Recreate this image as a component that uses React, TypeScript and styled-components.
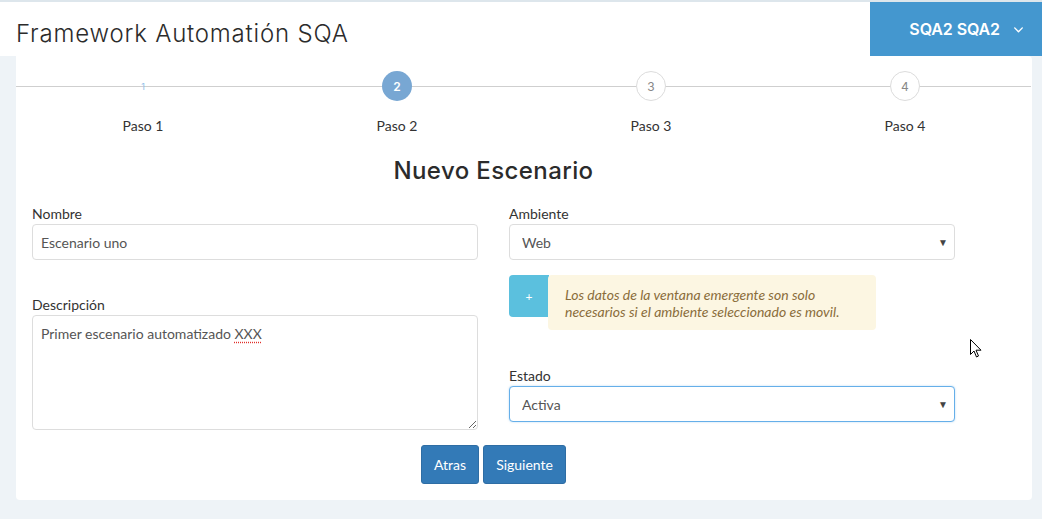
import React from "react";
import styled, { createGlobalStyle } from "styled-components";

const Global = createGlobalStyle`
  html, body { margin: 0; padding: 0; }
  body {
    background: #eef3f7;
    font-family: Lato, "Open Sans", sans-serif;
    color: #333;
  }
  * { box-sizing: border-box; }
`;

const Page = styled.div`
  min-height: 519px;
  background: #eef3f7;
  border-top: 2px solid #dde6ec;
`;

const Header = styled.header`
  display: flex;
  justify-content: space-between;
  align-items: stretch;
  height: 54px;
  background: #fff;
`;

const Brand = styled.h1`
  margin: 0;
  padding-left: 16px;
  align-self: center;
  margin-top: 8px;
  font-family: Inter, "Open Sans", sans-serif;
  font-weight: 300;
  font-size: 24px;
  letter-spacing: 0.8px;
  color: #2b2b2b;
`;

const UserMenu = styled.button`
  width: 172px;
  border: 0;
  background: #4497cf;
  color: #fff;
  font-family: Inter, "Open Sans", sans-serif;
  font-weight: 600;
  font-size: 16px;
  display: flex;
  align-items: center;
  justify-content: flex-end;
  gap: 12px;
  padding: 0 17px 0 0;
  letter-spacing: -0.1px;
`;

const Main = styled.main`
  padding: 0 10px 19px 16px;
`;

const Card = styled.section`
  position: relative;
  background: #fff;
  border-radius: 0 4px 4px 4px;
  padding: 15px 0 16px;
`;

const Stepper = styled.ol`
  position: relative;
  list-style: none;
  margin: 0;
  padding: 0;
  display: grid;
  grid-template-columns: repeat(4, 1fr);
  &::before {
    content: "";
    position: absolute;
    left: 0;
    right: 1px;
    top: 15px;
    height: 1px;
    background: #cfcfcf;
  }
`;

const Step = styled.li`
  position: relative;
  display: flex;
  flex-direction: column;
  align-items: center;
`;

const Dot = styled.span<{ $state: "done" | "active" | "todo" }>`
  width: 30px;
  height: 30px;
  border-radius: 50%;
  display: flex;
  align-items: center;
  justify-content: center;
  font-family: Inter, "Open Sans", sans-serif;
  font-size: ${(p) => (p.$state === "done" ? "9px" : "12px")};
  font-weight: ${(p) => (p.$state === "active" ? 600 : 400)};
  background: ${(p) =>
    p.$state === "active" ? "#78a7d3" : p.$state === "todo" ? "#fff" : "transparent"};
  color: ${(p) =>
    p.$state === "active" ? "#fff" : p.$state === "todo" ? "#888" : "#8fc0e8"};
  border: 1px solid
    ${(p) => (p.$state === "todo" ? "#dcdcdc" : "transparent")};
`;

const StepLabel = styled.span`
  margin-top: 15px;
  font-size: 14px;
  line-height: 20px;
  color: #333;
`;

const Inner = styled.div`
  margin-left: 16px;
  width: 923px;
`;

const Title = styled.h2`
  margin: 18px 0 16px;
  text-align: center;
  font-family: Inter, "Open Sans", sans-serif;
  font-weight: 500;
  font-size: 24px;
  line-height: 34px;
  color: #2b2b2b;
  letter-spacing: 0.4px;
`;

const Form = styled.form`
  display: grid;
  grid-template-columns: 446px 446px;
  column-gap: 31px;
`;

const Column = styled.div`
  display: flex;
  flex-direction: column;
`;

const Group = styled.div<{ $mt?: number }>`
  display: flex;
  flex-direction: column;
  margin-top: ${(p) => p.$mt ?? 0}px;
`;

const Label = styled.label`
  font-size: 14px;
  line-height: 20px;
  color: #333;
`;

const fieldBase = `
  width: 100%;
  font-family: Lato, "Open Sans", sans-serif;
  font-size: 14px;
  color: #555;
  background: #fff;
  border: 1px solid #ddd;
  border-radius: 4px;
  padding: 0 8px;
`;

const Input = styled.input`
  ${fieldBase}
  height: 36px;
  outline: none;
`;

const TextArea = styled.div`
  ${fieldBase}
  height: 115px;
  padding: 8px 8px;
  line-height: 20px;
  resize: both;
  overflow: auto;
`;

const Misspelled = styled.span`
  text-decoration: underline dotted #e0302a;
  text-underline-offset: 3px;
`;

const SelectWrap = styled.div`
  position: relative;
`;

const Select = styled.select<{ $focus?: boolean }>`
  ${fieldBase}
  appearance: none;
  height: 36px;
  padding-left: 12px;
  outline: none;
  border-color: ${(p) => (p.$focus ? "#66afe9" : "#ddd")};
  box-shadow: ${(p) => (p.$focus ? "0 0 2px rgba(102,175,233,.5)" : "none")};
`;

const Caret = styled.span`
  position: absolute;
  right: 7px;
  top: 50%;
  transform: translateY(-50%);
  font-size: 10px;
  color: #444;
  pointer-events: none;
`;

const Notice = styled.div`
  display: flex;
  align-items: flex-start;
  margin-top: 15px;
`;

const AddButton = styled.button`
  width: 40px;
  height: 42px;
  border: 0;
  border-radius: 4px 0 0 4px;
  background: #5bc0de;
  color: #fff;
  font-size: 12px;
  font-family: Lato, sans-serif;
  padding: 0;
`;

const NoticeText = styled.p`
  margin: 0 0 0 -1px;
  width: 328px;
  height: 55px;
  padding: 11px 10px 0 17px;
  background: #fcf6e2;
  border-radius: 4px;
  font-size: 14px;
  line-height: 17px;
  font-style: italic;
  color: #8a6d3b;
`;

const Actions = styled.div`
  display: flex;
  justify-content: center;
  gap: 4px;
  margin-top: 15px;
`;

const Button = styled.button`
  height: 39px;
  padding: 0 12px;
  background: #337ab7;
  border: 1px solid #2e6da4;
  border-radius: 3px;
  color: #fff;
  font-family: Lato, sans-serif;
  font-size: 14px;
`;

const Cursor = styled.svg`
  position: absolute;
  left: 954px;
  top: 283px;
`;

export default function App() {
  return (
    <>
      <Global />
      <Page>
        <Header>
          <Brand>Framework Automatión SQA</Brand>
          <UserMenu type="button">
            SQA2 SQA2
            <svg width="13" height="13" viewBox="0 0 24 24" fill="none" stroke="#fff" strokeWidth="2.6" strokeLinecap="round" strokeLinejoin="round">
              <path d="M5 9l7 7 7-7" />
            </svg>
          </UserMenu>
        </Header>
        <Main>
          <Card>
            <Stepper>
              <Step>
                <Dot $state="done">1</Dot>
                <StepLabel>Paso 1</StepLabel>
              </Step>
              <Step>
                <Dot $state="active">2</Dot>
                <StepLabel>Paso 2</StepLabel>
              </Step>
              <Step>
                <Dot $state="todo">3</Dot>
                <StepLabel>Paso 3</StepLabel>
              </Step>
              <Step>
                <Dot $state="todo">4</Dot>
                <StepLabel>Paso 4</StepLabel>
              </Step>
            </Stepper>
            <Inner>
              <Title>Nuevo Escenario</Title>
              <Form onSubmit={(e) => e.preventDefault()}>
                <Column>
                  <Group>
                    <Label>Nombre</Label>
                    <Input defaultValue="Escenario uno" />
                  </Group>
                  <Group $mt={35}>
                    <Label>Descripción</Label>
                    <TextArea role="textbox" aria-multiline="true">
                      Primer escenario automatizado <Misspelled>XXX</Misspelled>
                    </TextArea>
                  </Group>
                </Column>
                <Column>
                  <Group>
                    <Label>Ambiente</Label>
                    <SelectWrap>
                      <Select defaultValue="Web">
                        <option>Web</option>
                        <option>Movil</option>
                      </Select>
                      <Caret>▼</Caret>
                    </SelectWrap>
                  </Group>
                  <Notice>
                    <AddButton type="button">+</AddButton>
                    <NoticeText>
                      Los datos de la ventana emergente son solo necesarios si el ambiente seleccionado es movil.
                    </NoticeText>
                  </Notice>
                  <Group $mt={36}>
                    <Label>Estado</Label>
                    <SelectWrap>
                      <Select $focus defaultValue="Activa">
                        <option>Activa</option>
                        <option>Inactiva</option>
                      </Select>
                      <Caret>▼</Caret>
                    </SelectWrap>
                  </Group>
                </Column>
              </Form>
              <Actions>
                <Button type="button">Atras</Button>
                <Button type="button">Siguiente</Button>
              </Actions>
            </Inner>
            <Cursor width="13" height="20" viewBox="0 0 13 20">
              <path d="M0.5 0.5 L0.5 15.5 L4 12 L6.5 18 L8.5 17 L6 11.2 L11 11.2 Z" fill="#fff" stroke="#000" strokeWidth="1" strokeLinejoin="round" />
            </Cursor>
          </Card>
        </Main>
      </Page>
    </>
  );
}
